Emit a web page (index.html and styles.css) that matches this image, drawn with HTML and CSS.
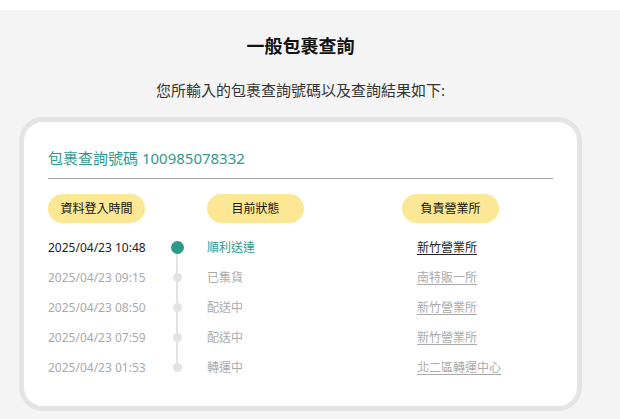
FILE: index.html
```html
<!DOCTYPE html>
<html lang="zh-Hant">
<head>
<meta charset="utf-8">
<title>一般包裹查詢</title>
<link rel="stylesheet" href="styles.css">
</head>
<body>
<div class="topbar"></div>
<main class="page">
  <h1 class="title">一般包裹查詢</h1>
  <p class="intro">您所輸入的包裹查詢號碼以及查詢結果如下:</p>
  <section class="card">
    <h2 class="tracking">包裹查詢號碼 100985078332</h2>
    <div class="cols heads">
      <div><span class="pill">資料登入時間</span></div>
      <div></div>
      <div class="pad-status"><span class="pill">目前狀態</span></div>
      <div class="pad-head-office"><span class="pill">負責營業所</span></div>
    </div>
    <div class="cols rows">
      <div class="cell current">2025/04/23 10:48</div>
      <div class="cell mark first"><span class="dot active"></span></div>
      <div class="cell pad-status current-status">順利送達</div>
      <div class="cell pad-office current"><a href="#">新竹營業所</a></div>

      <div class="cell">2025/04/23 09:15</div>
      <div class="cell mark"><span class="dot"></span></div>
      <div class="cell pad-status">已集貨</div>
      <div class="cell pad-office"><a href="#">南特販一所</a></div>

      <div class="cell">2025/04/23 08:50</div>
      <div class="cell mark"><span class="dot"></span></div>
      <div class="cell pad-status">配送中</div>
      <div class="cell pad-office"><a href="#">新竹營業所</a></div>

      <div class="cell">2025/04/23 07:59</div>
      <div class="cell mark"><span class="dot"></span></div>
      <div class="cell pad-status">配送中</div>
      <div class="cell pad-office"><a href="#">新竹營業所</a></div>

      <div class="cell">2025/04/23 01:53</div>
      <div class="cell mark last"><span class="dot"></span></div>
      <div class="cell pad-status">轉運中</div>
      <div class="cell pad-office"><a href="#">北二區轉運中心</a></div>
    </div>
  </section>
</main>
</body>
</html>
```
FILE: styles.css
```css
html, body {
  margin: 0;
  padding: 0;
}

body {
  background: #f4f4f4;
  font-family: "Noto Sans", "Noto Sans CJK TC", sans-serif;
  color: #222;
  height: 419px;
  overflow: hidden;
}

.topbar {
  height: 10px;
  background: #ffffff;
}

.page {
  width: 563px;
  margin-left: 19px;
  padding-top: 23px;
}

.title {
  margin: 0;
  text-align: center;
  font-size: 18px;
  line-height: 26px;
  font-weight: 700;
  color: #111;
}

.intro {
  margin: 20px 0 0;
  text-align: center;
  font-size: 15px;
  line-height: 22px;
  color: #333;
}

.card {
  margin-top: 16px;
  background: #ffffff;
  border: 5px solid #e4e4e4;
  border-radius: 24px;
  padding: 26px 24px 24px;
}

.tracking {
  margin: 0;
  font-size: 15px;
  font-weight: 400;
  line-height: 21px;
  color: #2f9a8b;
  padding-bottom: 9px;
  border-bottom: 1px solid #aaaaaa;
}

/* shared column tracks for the header pills and the timeline rows */
.cols {
  display: grid;
  grid-template-columns: 114px 30px 195px 1fr;
  font-size: 12px;
}

.heads {
  margin-top: 15px;
  grid-auto-rows: 29px;
}

.rows {
  margin-top: 9px;
  grid-auto-rows: 30px;
}

.pill {
  display: inline-block;
  width: 97px;
  height: 29px;
  line-height: 29px;
  border-radius: 15px;
  background: #fce795;
  text-align: center;
  color: #111;
  font-size: 12px;
}

.pad-status {
  padding-left: 15px;
}

.pad-head-office {
  padding-left: 15px;
}

.pad-office {
  padding-left: 30px;
}

.cell {
  display: flex;
  align-items: center;
  color: #aaaaaa;
}

.cell a {
  color: inherit;
  text-decoration: underline;
  text-underline-offset: 2px;
}

.current {
  color: #222;
}

.current-status {
  color: #2f9a8b;
}

.mark {
  position: relative;
  justify-content: center;
}

/* vertical rail linking the status dots */
.mark::before {
  content: "";
  position: absolute;
  left: 14px;
  width: 2px;
  top: 0;
  bottom: 0;
  background: #e3e3e3;
}

.mark.first::before {
  top: 15px;
}

.mark.last::before {
  bottom: 15px;
}

.dot {
  position: relative;
  width: 9px;
  height: 9px;
  border-radius: 50%;
  background: #e3e3e3;
}

.dot.active {
  width: 13px;
  height: 13px;
  background: #2a9a89;
}
```
